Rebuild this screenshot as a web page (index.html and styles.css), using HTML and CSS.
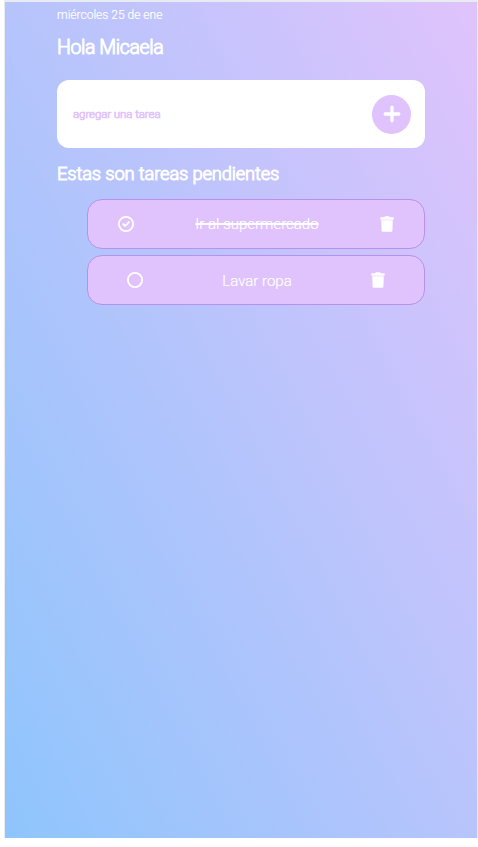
FILE: index.html
```html
<!DOCTYPE html>
<html lang="es">
<head>
<meta charset="utf-8">
<title>Tareas</title>
<link rel="stylesheet" href="styles.css">
</head>
<body>
<main class="app">
  <p class="date">miércoles 25 de ene</p>
  <h1 class="greeting">Hola Micaela</h1>
  <form class="add">
    <span class="hint">agregar una tarea</span>
    <button class="plus" type="button" aria-label="Agregar">
      <svg width="18" height="18" viewBox="0 0 18 18"><path d="M9 2.2v13.6M2.2 9h13.6" stroke="#fff" stroke-width="3.3" stroke-linecap="round"/></svg>
    </button>
  </form>
  <h2 class="subtitle">Estas son tareas pendientes</h2>
  <ul class="tasks">
    <li class="task">
      <svg class="check" width="16" height="16" viewBox="0 0 16 16" fill="none" stroke="#fff"><circle cx="8" cy="8" r="7.1" stroke-width="1.8"/><path d="M4.7 7.6l2.4 2.3 4.3-4.2" stroke-width="1.8"/></svg>
      <span class="name done">Ir al supermercado</span>
      <svg class="trash" width="14" height="16" viewBox="0 0 14 16" fill="#fff"><path d="M.4 1.2h3.8L5 .3h4l.8.9h3.8v2.6H.4zM1.2 4.2h11.6l-.4 10.5q-.1 1.1-1.2 1.1H2.8q-1.1 0-1.2-1.1z"/></svg>
    </li>
    <li class="task">
      <svg class="check" width="16" height="16" viewBox="0 0 16 16" fill="none" stroke="#fff"><circle cx="8" cy="8" r="7.1" stroke-width="1.8"/></svg>
      <span class="name">Lavar ropa</span>
      <svg class="trash" width="14" height="16" viewBox="0 0 14 16" fill="#fff"><path d="M.4 1.2h3.8L5 .3h4l.8.9h3.8v2.6H.4zM1.2 4.2h11.6l-.4 10.5q-.1 1.1-1.2 1.1H2.8q-1.1 0-1.2-1.1z"/></svg>
    </li>
  </ul>
</main>
</body>
</html>
```
FILE: styles.css
```css
* { box-sizing: border-box; margin: 0; padding: 0; }
body {
  background: #fff;
  font-family: Roboto, "Liberation Sans", sans-serif;
  font-weight: 300;
  color: #fff;
}
.app {
  width: 474px;
  height: 838px;
  margin-left: 4px;
  padding: 6px 52px 0;
  border: solid #e9ebf2;
  border-width: 2px 1px 0;
  background: linear-gradient(62deg, #8ec5fc 0%, #e0c3fc 100%) padding-box;
}
.date {
  font-size: 12px;
  line-height: 14px;
  -webkit-text-stroke: .2px #fff;
}
.greeting {
  margin-top: 14px;
  font-size: 19.5px;
  line-height: 24px;
  font-weight: 300;
  letter-spacing: -.4px;
  -webkit-text-stroke: .9px #fff;
}
.add {
  display: flex;
  align-items: center;
  justify-content: space-between;
  height: 68px;
  margin-top: 20px;
  padding: 0 14px 0 16px;
  background: #fff;
  border-radius: 12px;
}
.hint {
  color: #e0c3fc;
  font-size: 11.5px;
  letter-spacing: -.08px;
  -webkit-text-stroke: .7px #e0c3fc;
}
.plus {
  display: flex;
  align-items: center;
  justify-content: center;
  width: 39px;
  height: 39px;
  border: 0;
  border-radius: 50%;
  background: #e0c3fc;
}
.subtitle {
  margin-top: 14px;
  font-size: 18.4px;
  line-height: 24px;
  font-weight: 300;
  letter-spacing: -.18px;
  -webkit-text-stroke: .9px #fff;
}
.tasks { list-style: none; margin: 13px 0 0 30px; display: grid; gap: 6px; }
.task {
  display: flex;
  align-items: center;
  justify-content: space-around;
  height: 50px;
  border: 1px solid #b890ee;
  border-radius: 15px;
  background: #e0c3fc;
}
.task svg { margin-bottom: 1px; }
.task + .task { padding-top: 1px; }
.name {
  font-size: 15px;
  line-height: 18px;
  -webkit-text-stroke: .2px #fff;
}
.done { text-decoration: line-through; text-decoration-thickness: 1.5px; }
```
